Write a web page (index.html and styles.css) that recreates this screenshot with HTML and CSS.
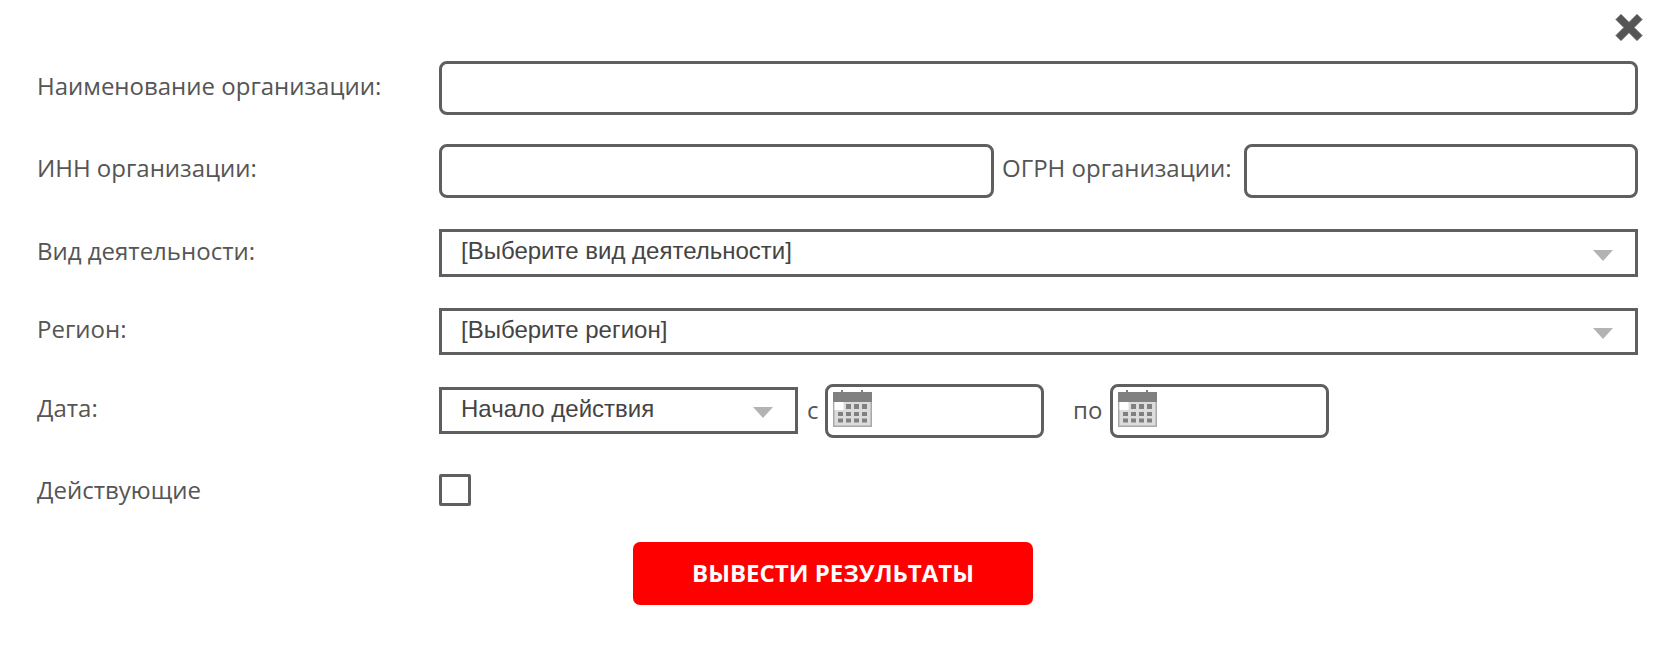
FILE: index.html
```html
<!DOCTYPE html>
<html lang="ru">
<head>
<meta charset="utf-8">
<title>Поиск организаций</title>
<link rel="stylesheet" href="styles.css">
</head>
<body>
<form class="dialog">
  <div class="dialog-head">
    <button type="button" class="close" aria-label="Закрыть">
      <svg width="28" height="29" viewBox="0 0 28 29"><path d="M6 1.500 L14 9.500 L22 1.500 L27 6.500 L19 14.500 L27 22.500 L22 27.500 L14 19.500 L6 27.500 L1 22.500 L9 14.500 L1 6.500 Z" fill="#555" stroke="#555" stroke-width="1" stroke-linejoin="round"/></svg>
    </button>
  </div>
  <div class="row row-name">
    <label class="label">Наименование организации:</label>
    <input class="field grow" type="text">
  </div>
  <div class="row row-inn">
    <label class="label">ИНН организации:</label>
    <input class="field inn" type="text">
    <label class="label-inline">ОГРН организации:</label>
    <input class="field grow" type="text">
  </div>
  <div class="row row-kind">
    <label class="label">Вид деятельности:</label>
    <div class="select grow"><span>[Выберите вид деятельности]</span><svg class="arrow" width="20" height="11" viewBox="0 0 20 11"><path d="M0 0H20L10 11Z" fill="#b3b3b3"/></svg></div>
  </div>
  <div class="row row-region">
    <label class="label">Регион:</label>
    <div class="select grow"><span>[Выберите регион]</span><svg class="arrow" width="20" height="11" viewBox="0 0 20 11"><path d="M0 0H20L10 11Z" fill="#b3b3b3"/></svg></div>
  </div>
  <div class="row row-date">
    <label class="label">Дата:</label>
    <div class="select date-kind"><span>Начало действия</span><svg class="arrow" width="20" height="11" viewBox="0 0 20 11"><path d="M0 0H20L10 11Z" fill="#b3b3b3"/></svg></div>
    <span class="sep-from">с</span>
    <div class="date-field">
      <svg class="cal" width="39" height="37" viewBox="0 0 39 37"><use href="#cal"/></svg>
    </div>
    <span class="sep-to">по</span>
    <div class="date-field">
      <svg class="cal" width="39" height="37" viewBox="0 0 39 37"><use href="#cal"/></svg>
    </div>
  </div>
  <div class="row row-active">
    <label class="label label-active">Действующие</label>
    <span class="checkbox"></span>
  </div>
  <div class="actions">
    <button type="button" class="submit">ВЫВЕСТИ РЕЗУЛЬТАТЫ</button>
  </div>
</form>
<svg class="defs" width="0" height="0">
  <defs>
    <g id="cal">
      <rect x="0" y="3" width="39" height="34" fill="#a8a8a8"/>
      <rect x="1.500" y="12" width="36" height="23.5" fill="#dcdcdc"/>
      <rect x="0" y="2" width="39" height="10" fill="#808080"/>
      <rect x="8" y="0" width="2" height="4" fill="#808080"/>
      <rect x="28" y="0" width="2" height="4" fill="#808080"/>
      <rect x="1.500" y="12" width="9" height="8" fill="#fff"/>
      <path fill="#808080" d="M13 14h5v5h-5zM21 14h5v5h-5zM29 14h5v5h-5zM5 22h5v4h-5zM13 22h5v4h-5zM21 22h5v4h-5zM29 22h5v4h-5zM5 28.500h5v4h-5zM13 28.500h5v4h-5zM21 28.500h5v4h-5zM29 28.500h5v4h-5z"/>
    </g>
  </defs>
</svg>
</body>
</html>
```
FILE: styles.css
```css
* { box-sizing: border-box; }
html, body { margin: 0; padding: 0; background: #fff; }
body { font-family: "Open Sans", sans-serif; font-size: 24px; color: #555; }
.dialog { width: 1668px; height: 650px; padding: 0 30px 0 37px; }
.dialog-head { height: 61px; display: flex; justify-content: flex-end; padding-top: 13px; margin-right: -5px; }
.close { width: 28px; height: 29px; padding: 0; border: 0; background: none; display: block; }
.close svg { display: block; }
.row { display: flex; align-items: center; }
.label { width: 402px; flex: none; position: relative; top: -3px; }
.row-inn .label { top: -4px; }
.row-date .label { top: -4px; }
.label-active { top: -1px; }
.grow { flex: 1 1 auto; min-width: 0; }
.field { height: 54px; border: 3px solid #5f5f5f; border-radius: 8px; background: #fff; padding: 0 10px; font: inherit; display: block; }
.row-name { height: 54px; }
.row-inn { height: 54px; margin-top: 29px; }
.inn { width: 555px; flex: none; }
.label-inline { margin: 0 12px 0 8px; flex: none; position: relative; top: -4px; }
.select { height: 48px; border: 3px solid #5f5f5f; background: #fff; display: flex; align-items: center; justify-content: space-between; padding: 0 22px 0 19px; font-family: "Liberation Sans", Arial, sans-serif; font-size: 24px; color: #444; }
.select span { position: relative; top: -2px; }
.arrow { display: block; flex: none; position: relative; top: 2px; }
.row-kind { height: 48px; margin-top: 31px; }
.row-region { height: 47px; margin-top: 31px; }
.row-region .select { height: 47px; }
.row-date { height: 54px; margin-top: 29px; }
.date-kind { width: 359px; flex: none; height: 47px; margin-top: -1px; }
.sep-from { width: 27px; flex: none; padding-left: 9px; position: relative; top: -2px; }
.sep-to { width: 66px; flex: none; padding-left: 29px; position: relative; top: -2px; }
.date-field { width: 219px; height: 54px; flex: none; border: 3px solid #5f5f5f; border-radius: 8px; background: #fff; padding: 3px 0 0 5px; }
.cal { display: block; }
.row-active { height: 32px; margin-top: 36px; }
.checkbox { width: 32px; height: 32px; border: 3px solid #5f5f5f; border-radius: 2px; background: #fff; display: block; }
.actions { margin-top: 36px; padding-left: 596px; }
.submit { width: 400px; height: 63px; border: 0; border-radius: 7px; background: #f00; color: #fff; font-family: "Open Sans", sans-serif; font-weight: 700; font-size: 24px; padding: 0 0 2px; display: block; }
.defs { position: absolute; }
```
